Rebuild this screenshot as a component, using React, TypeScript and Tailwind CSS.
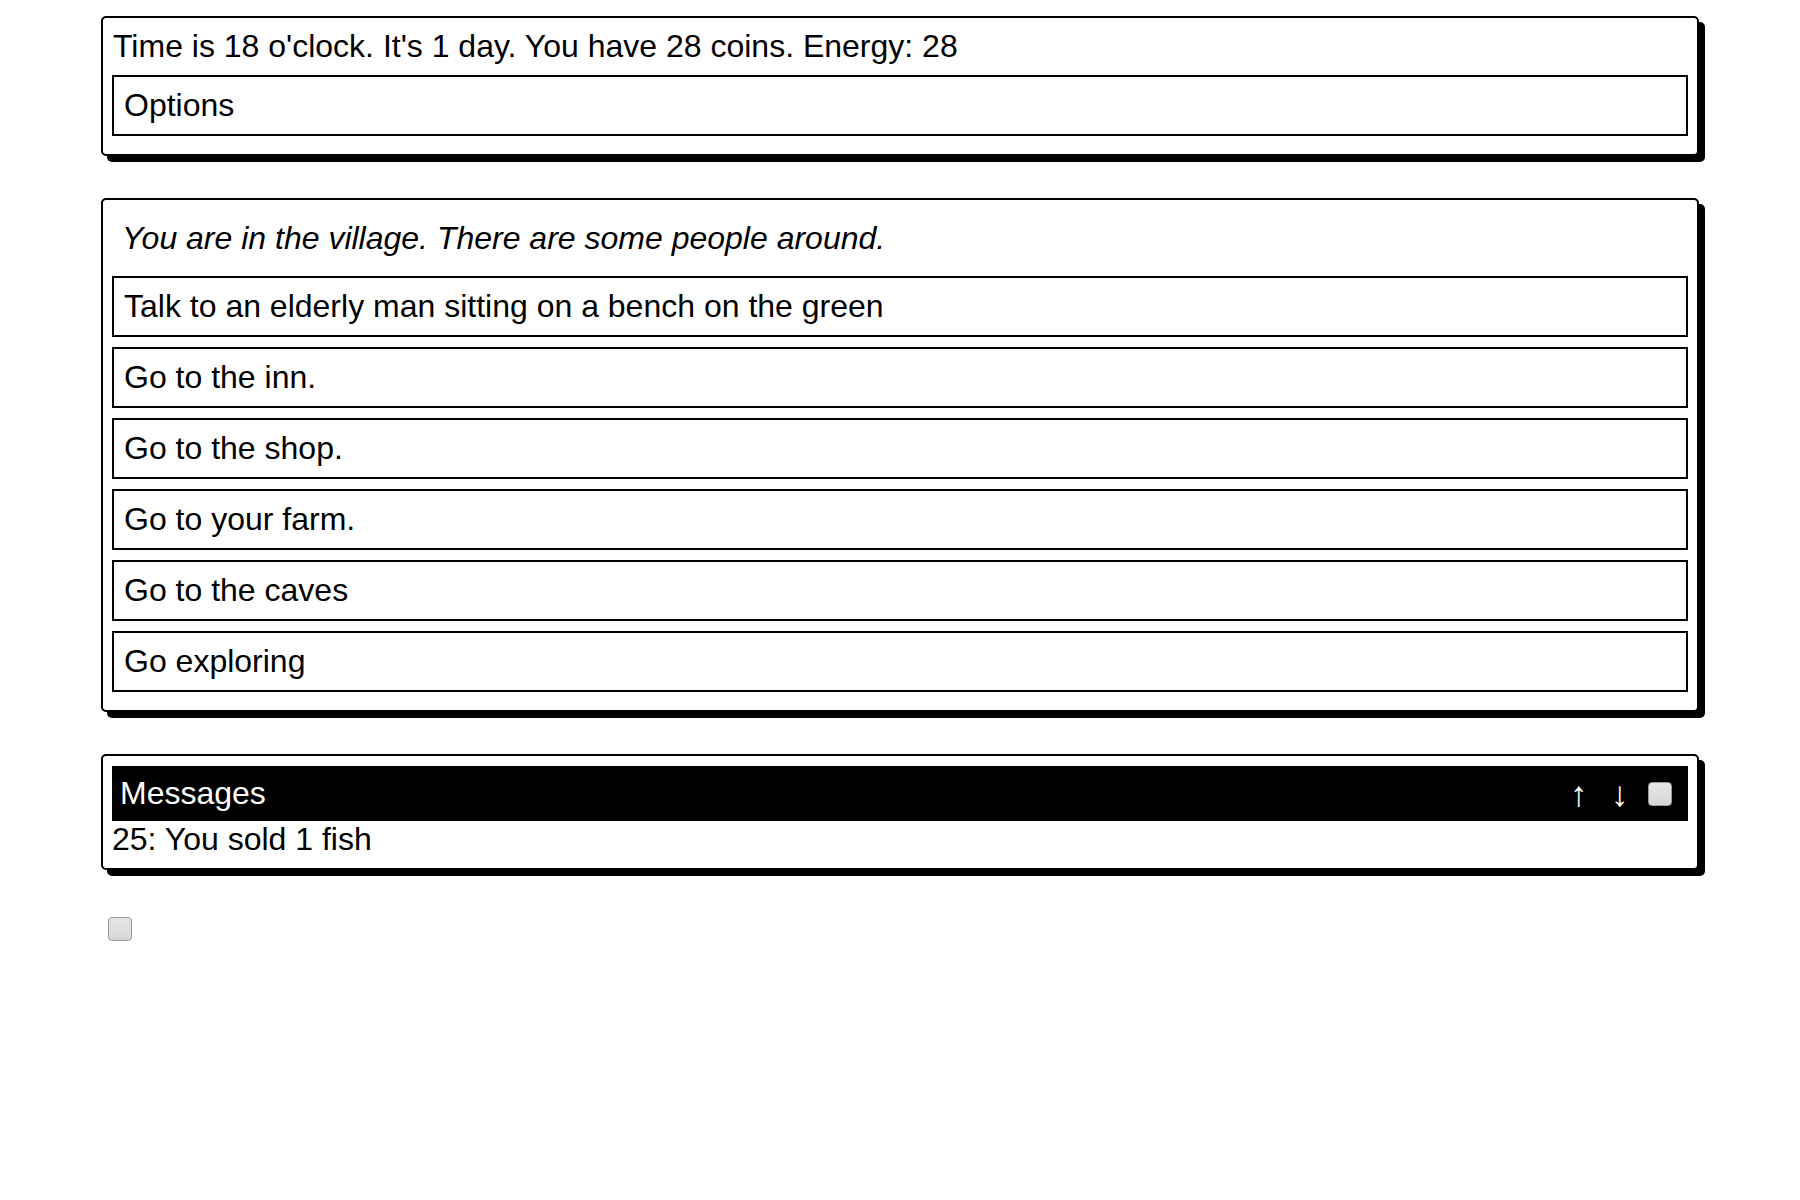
import { useState } from "react";

const choices = [
  "Talk to an elderly man sitting on a bench on the green",
  "Go to the inn.",
  "Go to the shop.",
  "Go to your farm.",
  "Go to the caves",
  "Go exploring",
];

const Panel = ({ children, className = "" }: { children: React.ReactNode; className?: string }) => (
  <div
    className={`w-[1598px] rounded-[5px] border-2 border-black bg-white px-[9px] pt-[10px] shadow-[6px_6px_0_0_#000] ${className}`}
  >
    {children}
  </div>
);

const Choice = ({ label, onClick }: { label: string; onClick?: () => void }) => (
  <button
    onClick={onClick}
    className="mt-[10px] block h-[61px] w-full border-2 border-black bg-white px-[10px] text-left leading-[37px] text-black"
  >
    {label}
  </button>
);

const Check = ({ className = "" }: { className?: string }) => (
  <input
    type="checkbox"
    className={`block h-[24px] w-[24px] appearance-none rounded-[4px] border border-[#9a9a9a] bg-[linear-gradient(#e6e6e6,#d6d6d6)] ${className}`}
  />
);

export default function App() {
  const [messages] = useState(["25: You sold 1 fish"]);

  return (
    <div className="min-h-[1200px] bg-white pt-[16px] font-['Liberation_Sans',Arial,sans-serif] text-[32px] leading-[37px] text-black">
      <div className="mx-auto w-[1598px]">
        <Panel className="pb-[18px]">
          <div className="pl-[1px]">Time is 18 o'clock. It's 1 day. You have 28 coins. Energy: 28</div>
          <Choice label="Options" />
        </Panel>

        <Panel className="mt-[42px] pb-[18px]">
          <div className="p-[10px] italic">You are in the village. There are some people around.</div>
          <div className="-mt-[1px]">
            {choices.map((c) => (
              <Choice key={c} label={c} />
            ))}
          </div>
        </Panel>

        <Panel className="mt-[42px] pb-[10px]">
          <div className="flex h-[55px] items-center bg-black pl-[8px] pr-[16px] text-white">
            <span className="flex-1">Messages</span>
            <span className="w-[16px] text-center text-[35px] leading-[22px]">↑</span>
            <span className="ml-[25px] w-[16px] text-center text-[35px] leading-[22px]">↓</span>
            <Check className="ml-[21px]" />
          </div>
          {messages.map((m) => (
            <div key={m}>{m}</div>
          ))}
        </Panel>

        <Check className="ml-[7px] mt-[47px]" />
      </div>
    </div>
  );
}
